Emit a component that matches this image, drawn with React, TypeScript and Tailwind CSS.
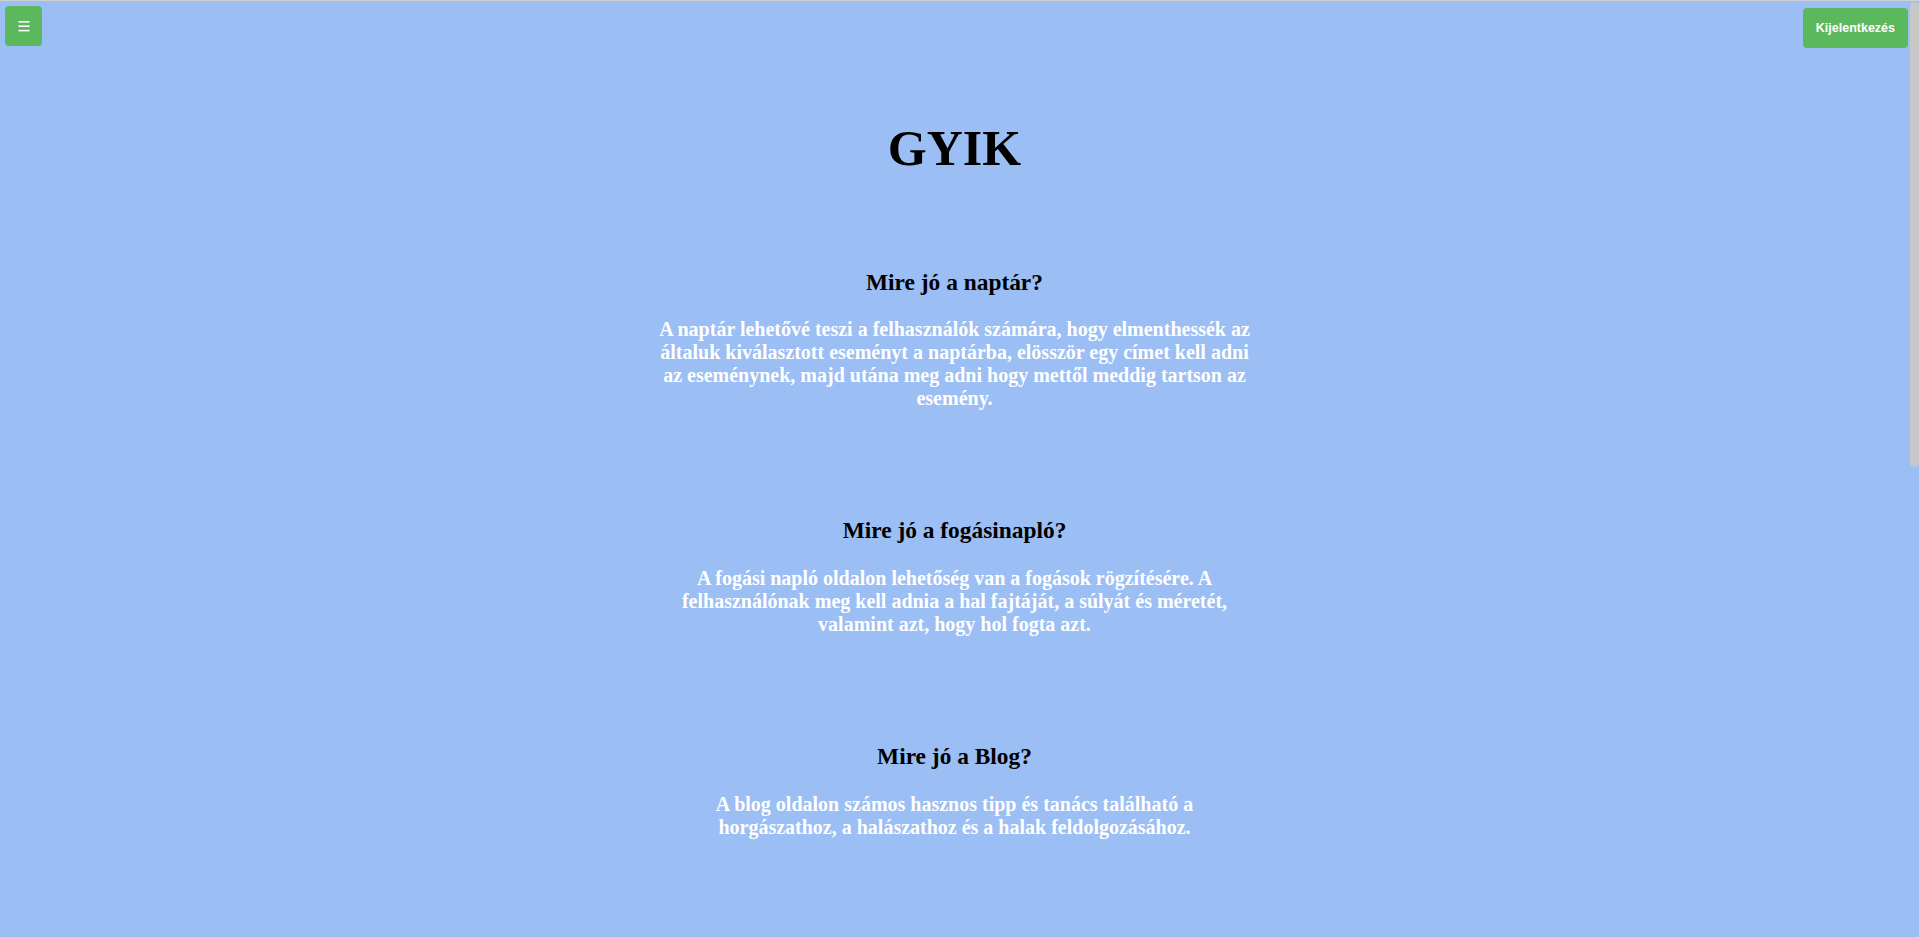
import React from "react";

const faqs = [
  {
    q: "Mire jó a naptár?",
    a: "A naptár lehetővé teszi a felhasználók számára, hogy elmenthessék az általuk kiválasztott eseményt a naptárba, elösször egy címet kell adni az eseménynek, majd utána meg adni hogy mettől meddig tartson az esemény.",
  },
  {
    q: "Mire jó a fogásinapló?",
    a: "A fogási napló oldalon lehetőség van a fogások rögzítésére. A felhasználónak meg kell adnia a hal fajtáját, a súlyát és méretét, valamint azt, hogy hol fogta azt.",
  },
  {
    q: "Mire jó a Blog?",
    a: "A blog oldalon számos hasznos tipp és tanács található a horgászathoz, a halászathoz és a halak feldolgozásához.",
  },
];

export default function App() {
  return (
    <div className="h-screen flex border-t border-[#d0d0d0] bg-[#9bbef4] overflow-hidden">
      <div className="flex-1 min-w-0 font-['Liberation_Serif','Times_New_Roman',serif]">
        <header className="flex justify-between items-start h-[48px]">
          <button className="mt-[5px] ml-[5px] w-[37px] h-[40px] rounded-[4px] bg-[#5cb85c] flex items-center justify-center">
            <svg width="12" height="11" viewBox="0 0 12 11">
              <rect x="0.5" y="0" width="11" height="1.6" fill="#fff" />
              <rect x="0.5" y="4.4" width="11" height="1.6" fill="#fff" />
              <rect x="0.5" y="8.8" width="11" height="1.6" fill="#fff" />
            </svg>
          </button>
          <button className="mt-[7px] mr-[1px] h-[40px] px-[13px] rounded-[4px] bg-[#5cb85c] text-white text-[12.5px] font-bold leading-none font-['Liberation_Sans',Arial,sans-serif]">
            Kijelentkezés
          </button>
        </header>
        <main className="w-[600px] mx-auto text-center">
          <h1 className="mt-[71px] text-[50px] leading-[1.15] font-bold text-black">GYIK</h1>
          <div className="mt-[91px] flex flex-col gap-[107px]">
            {faqs.map((f) => (
              <section key={f.q}>
                <h3 className="text-[23.4px] leading-[1.15] font-bold text-black">{f.q}</h3>
                <p className="mt-[23px] text-[20px] leading-[1.15] font-bold text-white">{f.a}</p>
              </section>
            ))}
          </div>
        </main>
      </div>
      <div className="w-[10px] shrink-0 flex justify-end">
        <div className="mt-[1px] w-[9px] h-[465px] rounded-[5px] bg-[#c8c8c8]" />
      </div>
    </div>
  );
}
